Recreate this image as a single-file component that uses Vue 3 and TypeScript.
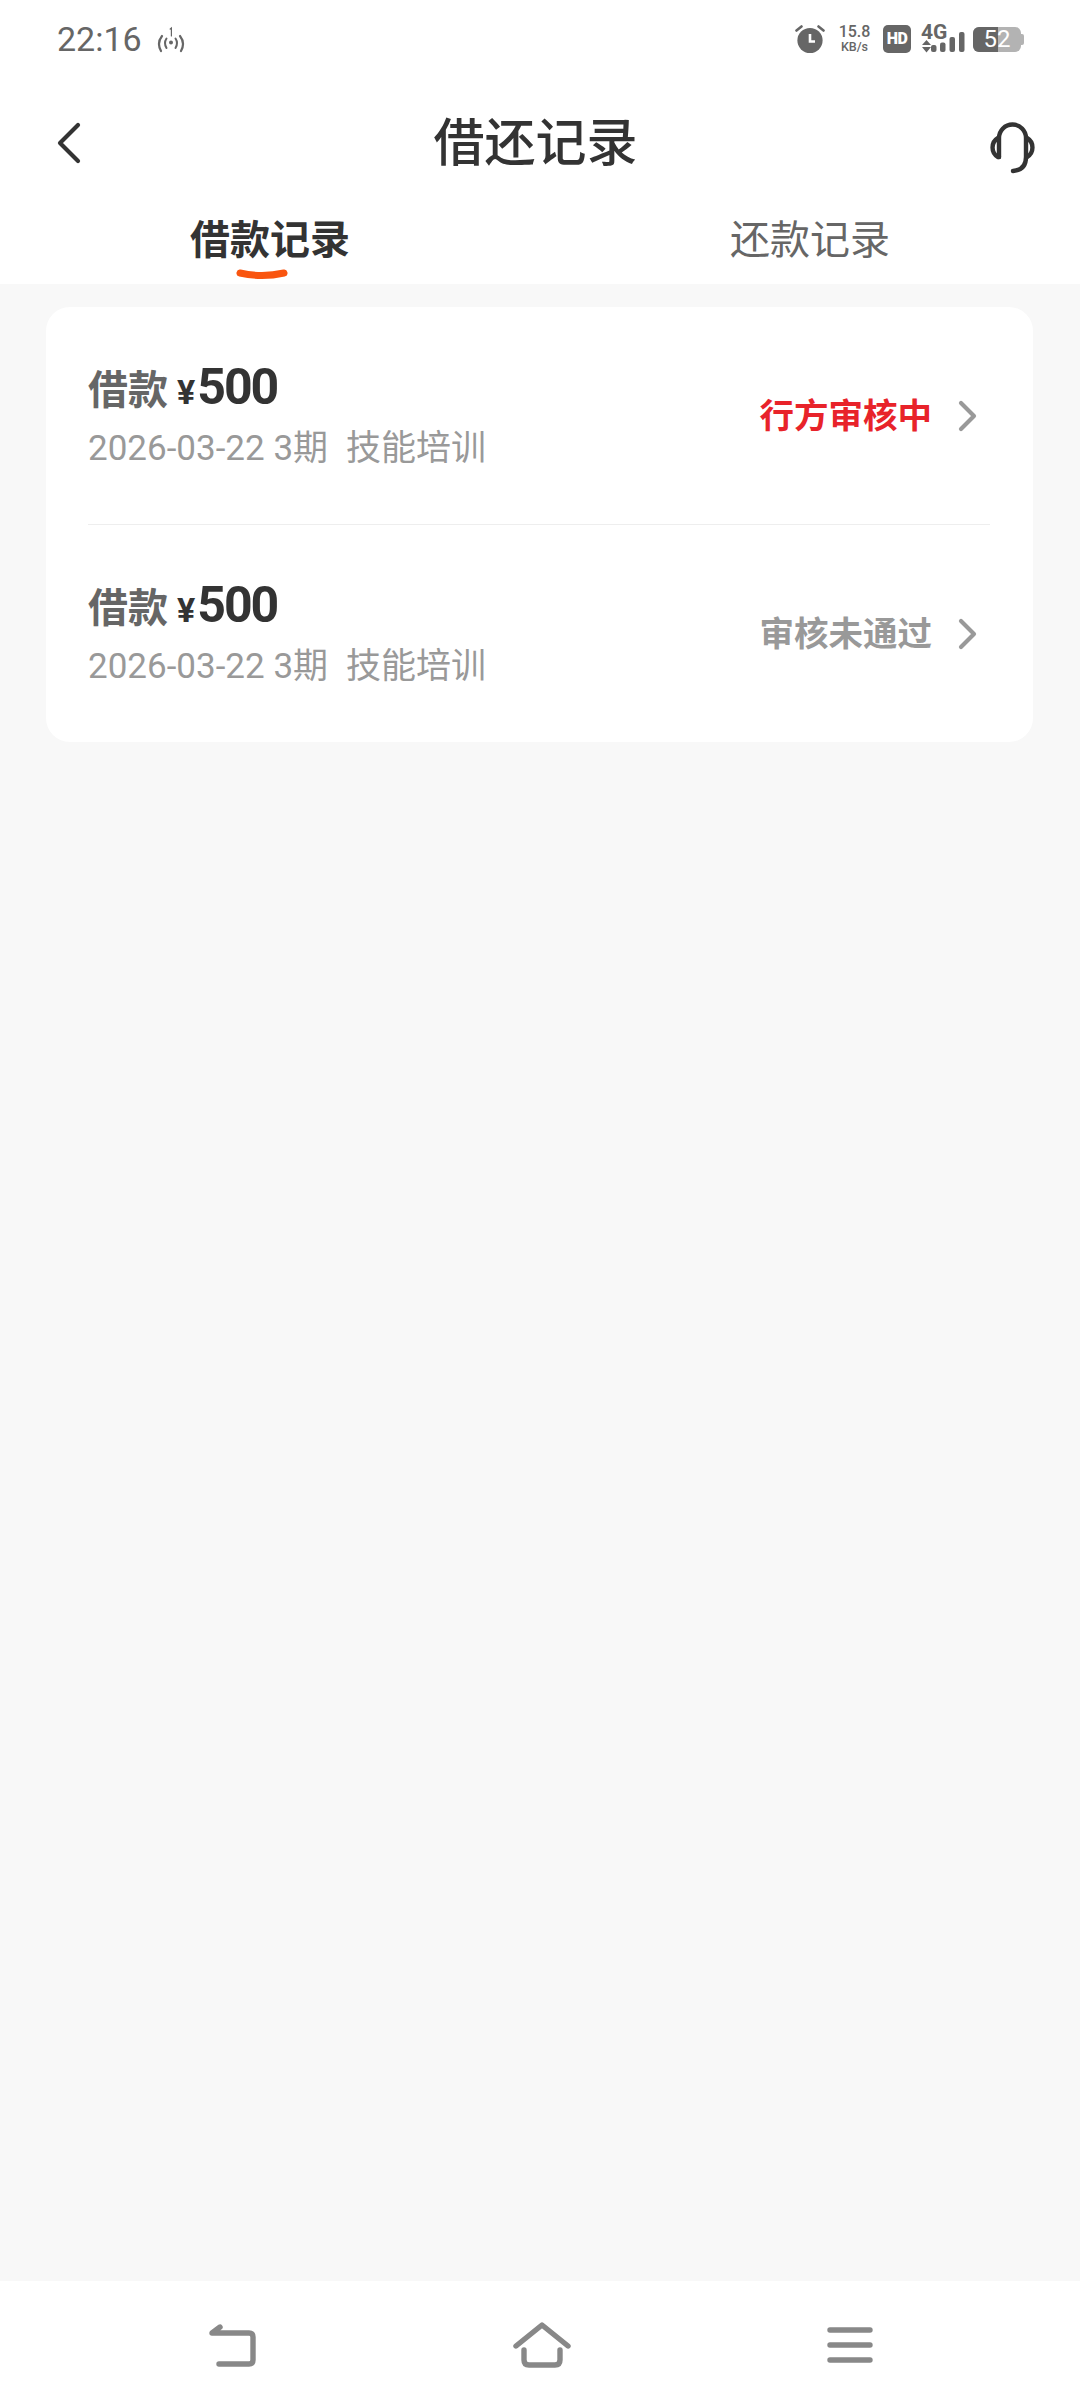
<script setup lang="ts">
interface LoanRecord {
  amount: string
  meta: string
  tag: string
  state: string
  danger: boolean
}
const records: LoanRecord[] = [
  { amount: '500', meta: '2026-03-22 3期', tag: '技能培训', state: '行方审核中', danger: true },
  { amount: '500', meta: '2026-03-22 3期', tag: '技能培训', state: '审核未通过', danger: false },
]
</script>

<template>
  <div class="page">
    <header class="top">
      <div class="statusbar">
        <span class="time">22:16</span>
        <svg class="hotspot" width="30" height="28" viewBox="0 0 30 28" fill="none" stroke="#666" stroke-linecap="round">
          <path d="M6 10 Q0.5 17 5 25" stroke-width="2.2" />
          <path d="M10.5 12.5 Q7.5 17 10.5 22" stroke-width="2" />
          <path d="M19.5 12.5 Q22.5 17 19.5 22" stroke-width="2" />
          <path d="M24 10 Q29.5 17 25 25" stroke-width="2.2" />
          <circle cx="15" cy="16.5" r="2" fill="#666" stroke="none" />
          <path d="M14.2 3 L15.4 2 V10" stroke-width="1.2" />
        </svg>
        <span class="grow"></span>
        <svg class="alarm" width="30" height="30" viewBox="0 0 30 30">
          <circle cx="15" cy="16.5" r="12.6" fill="#666" />
          <path d="M15 10 V17.5 H20" fill="none" stroke="#fff" stroke-width="2.6" />
          <path d="M1.5 6.5 L6.5 2.5 M28.5 6.5 L23.5 2.5" stroke="#666" stroke-width="2.6" stroke-linecap="round" />
        </svg>
        <span class="speed"><span class="speed-num">15.8</span><span class="speed-unit">KB/s</span></span>
        <span class="hd">HD</span>
        <svg class="signal" width="46" height="30" viewBox="0 0 46 30" fill="#666">
          <text x="0" y="15" class="net-text">4G</text>
          <path d="M5.5 16 L10 21 H1 Z M1 23 H10 L5.5 28.5 Z" />
          <rect x="10" y="21" width="5.5" height="7" rx="2" />
          <rect x="19" y="18.5" width="5.5" height="9.5" rx="2" />
          <rect x="28.5" y="13" width="5.5" height="15" rx="2" />
          <rect x="38" y="8" width="5.5" height="20" rx="2" />
        </svg>
        <span class="battery">
          <span class="battery-level"></span>
          <span class="battery-text">52</span>
          <span class="battery-nub"></span>
        </span>
      </div>

      <nav class="nav">
        <svg width="32" height="46" viewBox="0 0 32 46" fill="none" class="nav-back">
          <path d="M22 5 L4 23 L22 41" stroke="#333" stroke-width="4.2" stroke-linecap="round" stroke-linejoin="round" />
        </svg>
        <h1 class="title">借还记录</h1>
        <svg width="56" height="56" viewBox="0 0 56 56" fill="none" class="nav-service" stroke="#333" stroke-width="4.4" stroke-linecap="round">
          <path d="M16 39 V20 a13.5 13.5 0 0 1 27 0 V39 Q43 52 30 53" />
          <path d="M15 20 a11 11 0 0 0 0 19 H16" />
          <path d="M44 20 a11 11 0 0 1 0 19" />
        </svg>
      </nav>

      <div class="tabs">
        <div class="tab tab-active">
          借款记录
          <svg class="tab-mark" width="52" height="14" viewBox="0 0 52 14" fill="none">
            <path d="M4 4 Q26 9 48 4" stroke="#f9550f" stroke-width="7" stroke-linecap="round" />
          </svg>
        </div>
        <div class="tab">还款记录</div>
      </div>
    </header>

    <main class="content">
      <section class="card">
        <div v-for="(item, i) in records" :key="i" class="row">
          <div class="info">
            <div class="headline">
              <span class="label">借款</span>
              <span class="yen">¥</span>
              <span class="amount">{{ item.amount }}</span>
            </div>
            <div class="meta"><span>{{ item.meta }}</span><span class="tag">{{ item.tag }}</span></div>
          </div>
          <span class="state" :class="{ danger: item.danger }">{{ item.state }}</span>
          <svg class="chevron" width="20" height="32" viewBox="0 0 20 32" fill="none">
            <path d="M3 3 L16 16 L3 29" stroke="#999" stroke-width="4.2" stroke-linecap="round" stroke-linejoin="round" />
          </svg>
        </div>
      </section>
    </main>

    <footer class="bottom">
      <svg width="50" height="46" viewBox="0 0 50 46" fill="none" stroke="#888" stroke-width="5.4" stroke-linecap="round" stroke-linejoin="round">
        <path d="M12 42 H42 Q46 42 46 38 V15 Q46 11 42 11 H5 L13 5" />
      </svg>
      <svg width="58" height="46" viewBox="0 0 58 46" fill="none" stroke="#888" stroke-width="5.4" stroke-linecap="round" stroke-linejoin="round">
        <path d="M3 24 L29 3 L55 24" />
        <path d="M11 28 V38 Q11 43 16 43 H42 Q47 43 47 38 V28" />
      </svg>
      <svg width="46" height="38" viewBox="0 0 46 38" fill="none" stroke="#888" stroke-width="5.4" stroke-linecap="round">
        <path d="M3 4 H43 M3 19 H43 M3 34 H43" />
      </svg>
    </footer>
  </div>
</template>

<style>
html, body { margin: 0; background: #f8f8f8; }
</style>

<style scoped>
.page {
  width: 1080px;
  height: 2408px;
  display: flex;
  flex-direction: column;
  background: #f8f8f8;
  font-family: Roboto, "Noto Sans CJK SC", sans-serif;
  overflow: hidden;
}
.top { background: #fff; }
.statusbar {
  height: 78px;
  box-sizing: border-box;
  padding: 0 56px 0 57px;
  display: flex;
  align-items: center;
  color: #666;
}
.time { font-size: 34px; line-height: 1; margin-right: 14px; }
.hotspot { margin-top: 2px; }
.grow { flex: 1; }
.alarm { margin-right: 13px; }
.speed { display: flex; flex-direction: column; align-items: center; width: 33px; margin-right: 12px; font-weight: 500; }
.speed-num { font-size: 16px; line-height: 16px; }
.speed-unit { font-size: 12.5px; line-height: 14px; }
.hd {
  width: 28px; height: 28px; border-radius: 5px; background: #666; color: #fff;
  font-size: 16px; font-weight: 900; line-height: 28px; text-align: center; margin-right: 10px;
  letter-spacing: -0.5px;
}
.signal { margin-right: 6px; }
.net-text { font-family: Roboto, sans-serif; font-size: 21px; font-weight: 700; }
.battery {
  position: relative; width: 48px; height: 25px; border-radius: 6px; background: #b3b3b3;
  overflow: visible; margin-right: 3px;
}
.battery-level { position: absolute; left: 0; top: 0; bottom: 0; width: 25px; background: #666; border-radius: 6px 0 0 6px; }
.battery-text {
  position: absolute; inset: 0; color: #fff; font-size: 24px; line-height: 25px; text-align: center;
}
.battery-nub { position: absolute; right: -3px; top: 7px; width: 3px; height: 11px; background: #b3b3b3; border-radius: 0 2px 2px 0; }

.nav {
  height: 130px;
  box-sizing: border-box;
  padding: 0 41px 0 56px;
  display: flex;
  align-items: center;
  justify-content: space-between;
}
.title { margin: 0; font-size: 51px; line-height: 1; font-weight: 500; color: #333; }
.nav-service { margin-top: 6px; }

.tabs { height: 76px; display: flex; box-sizing: border-box; padding-bottom: 10px; }
.tab {
  position: relative; flex: 1; text-align: center;
  font-size: 40px; line-height: 66px; color: #666;
}
.tab-active { font-weight: 700; color: #333; }
.tab-mark { position: absolute; left: 236px; bottom: -9px; }

.content { flex: 1; padding: 23px 47px 0 46px; }
.card { background: #fff; border-radius: 24px; padding: 0 43px 0 42px; }
.row {
  height: 217px;
  box-sizing: border-box;
  display: flex;
  align-items: center;
  padding-right: 12px;
}
.row + .row { height: 218px; border-top: 1px solid #eeeeee; }
.info { flex: 1; }
.headline { display: flex; align-items: baseline; height: 58px; color: #333; }
.label { font-size: 40px; font-weight: 700; color: #666; line-height: 58px; margin-right: 9px; }
.yen { font-size: 34px; font-weight: 700; margin-right: 2px; }
.amount { font-size: 50px; font-weight: 700; letter-spacing: -2px; line-height: 58px; }
.meta { font-size: 35px; line-height: 50px; color: #999; margin-top: 8px; }
.tag { margin-left: 18px; }
.state { font-size: 34.5px; line-height: 50px; font-weight: 700; color: #999; margin-right: 26px; }
.state.danger { color: #e8232a; }

.bottom {
  height: 127px;
  box-sizing: border-box;
  background: #fff;
  display: flex;
  align-items: center;
  justify-content: space-between;
  padding: 0 207px 0 207px;
}
</style>
